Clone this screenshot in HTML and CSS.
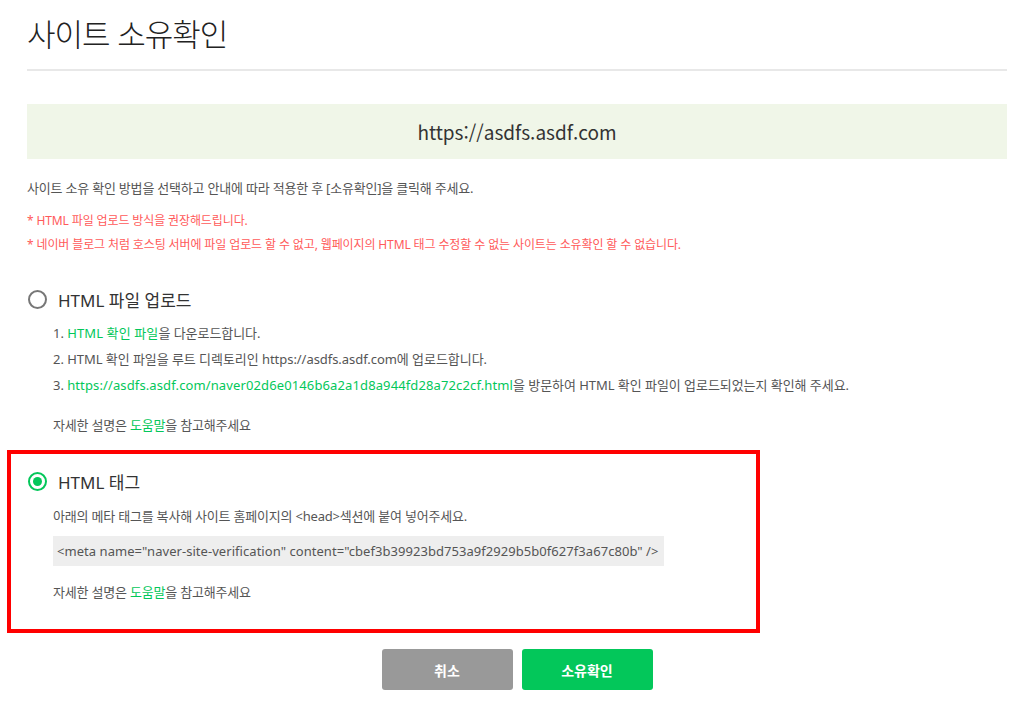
FILE: index.html
```html
<!DOCTYPE html>
<html lang="ko">
<head>
    <meta charset="UTF-8">
    <title>사이트 소유확인</title>
    <link rel="stylesheet" href="styles.css">
</head>
<body>
    <div class="page">
        <h1 class="title">사이트 소유확인</h1>

        <div class="site-url">https://asdfs.asdf.com</div>

        <p class="guide">사이트 소유 확인 방법을 선택하고 안내에 따라 적용한 후 [소유확인]을 클릭해 주세요.</p>
        <ul class="notice">
            <li>* HTML 파일 업로드 방식을 권장해드립니다.</li>
            <li>* 네이버 블로그 처럼 호스팅 서버에 파일 업로드 할 수 없고, 웹페이지의 HTML 태그 수정할 수 없는 사이트는 소유확인 할 수 없습니다.</li>
        </ul>

        <!-- HTML 파일 업로드 -->
        <div class="method">
            <label class="method-head"><span class="radio"></span>HTML 파일 업로드</label>
            <ol class="steps">
                <li>1. <a href="#" class="link">HTML 확인 파일</a>을 다운로드합니다.</li>
                <li>2. HTML 확인 파일을 루트 디렉토리인 https://asdfs.asdf.com에 업로드합니다.</li>
                <li>3. <a href="#" class="link">https://asdfs.asdf.com/naver02d6e0146b6a2a1d8a944fd28a72c2cf.html</a>을 방문하여 HTML 확인 파일이 업로드되었는지 확인해 주세요.</li>
            </ol>
            <p class="help">자세한 설명은 <a href="#" class="link">도움말</a>을 참고해주세요</p>
        </div>

        <!-- HTML 태그 (선택됨) -->
        <div class="method method-on">
            <label class="method-head"><span class="radio checked"></span>HTML 태그</label>
            <p class="desc">아래의 메타 태그를 복사해 사이트 홈페이지의 &lt;head&gt;섹션에 붙여 넣어주세요.</p>
            <div class="code"><span>&lt;meta name="naver-site-verification" content="cbef3b39923bd753a9f2929b5b0f627f3a67c80b" /&gt;</span></div>
            <p class="help">자세한 설명은 <a href="#" class="link">도움말</a>을 참고해주세요</p>
        </div>

        <div class="actions">
            <button class="btn btn-cancel">취소</button>
            <button class="btn btn-ok">소유확인</button>
        </div>
    </div>
</body>
</html>
```

FILE: styles.css
```css
body {
    margin: 0;
    background: #fff;
    font-family: "Noto Sans", "Noto Sans CJK KR", sans-serif;
    color: #555;
}
.page {
    width: 980px;
    padding: 0 25px 0 27px;
}
.title {
    margin: 13px 0 0;
    padding-bottom: 16px;
    font-family: "Noto Sans CJK KR", sans-serif;
    font-size: 31px;
    line-height: 40px;
    font-weight: 300;
    color: #222;
    letter-spacing: -1px;
    border-bottom: 2px solid #e8e8e8;
}
.site-url {
    margin-top: 33px;
    height: 55px;
    line-height: 55px;
    background: #f0f6e8;
    text-align: center;
    font-family: "Noto Sans CJK KR", sans-serif;
    font-size: 19px;
    color: #333;
}
.guide {
    margin: 19px 0 0;
    font-size: 13px;
    line-height: 20px;
    letter-spacing: -0.2px;
}
.notice {
    list-style: none;
    margin: 11px 0 0;
    padding: 0;
    font-size: 12px;
    line-height: 24px;
    color: #ff5a5a;
    letter-spacing: -0.12px;
}
.method {
    margin-top: 27px;
}
.method-head {
    display: flex;
    align-items: center;
    height: 30px;
    font-size: 17px;
    color: #333;
}
.radio {
    width: 15px;
    height: 15px;
    border: 2px solid #777;
    border-radius: 50%;
    margin: 0 11px 0 1px;
    display: flex;
    align-items: center;
    justify-content: center;
}
.radio.checked {
    border-color: #03c75a;
}
.radio.checked::after {
    content: "";
    width: 9px;
    height: 9px;
    border-radius: 50%;
    background: #03c75a;
}
.steps {
    list-style: none;
    margin: 6px 0 0;
    padding: 0 0 0 26px;
    font-size: 13px;
    line-height: 26px;
    letter-spacing: -0.05px;
}
.steps .link {
    letter-spacing: 0.12px;
}
.link {
    color: #03c75a;
    text-decoration: none;
}
.help {
    margin: 17px 0 0 26px;
    font-size: 13px;
    line-height: 20px;
    letter-spacing: -0.2px;
}
.method-on {
    width: 729px;
    margin: 15px 0 0 -20px;
    padding: 12px 0 27px 16px;
    border: 4px solid #f00;
}
.desc {
    margin: 10px 0 0 26px;
    font-size: 13px;
    line-height: 20px;
    letter-spacing: -0.2px;
}
.code {
    margin: 10px 0 0 26px;
}
.code span {
    display: inline-block;
    height: 30px;
    line-height: 30px;
    padding: 0 6px 0 4px;
    background: #eee;
    font-size: 13px;
    letter-spacing: 0.05px;
}
.method-on .help {
    margin-top: 16px;
}
.actions {
    display: flex;
    justify-content: center;
    gap: 9px;
    margin-top: 16px;
}
.btn {
    width: 131px;
    height: 41px;
    border: none;
    border-radius: 3px;
    color: #fff;
    font-family: "Noto Sans CJK KR", sans-serif;
    font-size: 14px;
    font-weight: 700;
    cursor: pointer;
}
.btn-cancel {
    background: #999;
}
.btn-ok {
    background: #03c75a;
}
```
